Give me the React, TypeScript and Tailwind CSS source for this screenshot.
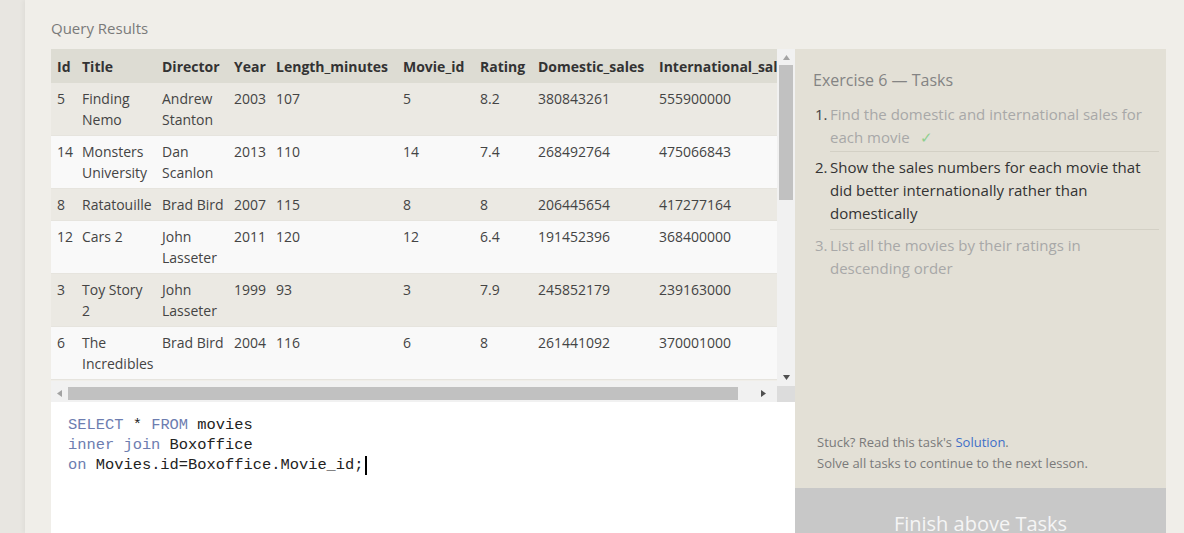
import React from "react"

type Row = {
  id: string
  title: string[]
  director: string[]
  year: string
  length: string
  movieId: string
  rating: string
  domestic: string
  intl: string
}

const rows: Row[] = [
  { id: "5", title: ["Finding", "Nemo"], director: ["Andrew", "Stanton"], year: "2003", length: "107", movieId: "5", rating: "8.2", domestic: "380843261", intl: "555900000" },
  { id: "14", title: ["Monsters", "University"], director: ["Dan", "Scanlon"], year: "2013", length: "110", movieId: "14", rating: "7.4", domestic: "268492764", intl: "475066843" },
  { id: "8", title: ["Ratatouille"], director: ["Brad Bird"], year: "2007", length: "115", movieId: "8", rating: "8", domestic: "206445654", intl: "417277164" },
  { id: "12", title: ["Cars 2"], director: ["John", "Lasseter"], year: "2011", length: "120", movieId: "12", rating: "6.4", domestic: "191452396", intl: "368400000" },
  { id: "3", title: ["Toy Story", "2"], director: ["John", "Lasseter"], year: "1999", length: "93", movieId: "3", rating: "7.9", domestic: "245852179", intl: "239163000" },
  { id: "6", title: ["The", "Incredibles"], director: ["Brad Bird"], year: "2004", length: "116", movieId: "6", rating: "8", domestic: "261441092", intl: "370001000" },
]

const headers = ["Id", "Title", "Director", "Year", "Length_minutes", "Movie_id", "Rating", "Domestic_sales", "International_sales"]
const widths = ["w-[25px]", "w-[80px]", "w-[72px]", "w-[42px]", "w-[127px]", "w-[77px]", "w-[58px]", "w-[121px]", "w-[150px]"]

function Lines({ parts }: { parts: string[] }) {
  return (
    <>
      {parts.map((p, i) => (
        <div key={i} className="whitespace-nowrap">{p}</div>
      ))}
    </>
  )
}

function ResultsTable() {
  return (
    <table className="w-[752px] table-fixed border-collapse text-left">
      <colgroup>
        {widths.map((w, i) => (
          <col key={i} className={w} />
        ))}
      </colgroup>
      <thead>
        <tr className="h-[34px] bg-[#dddcd3]">
          {headers.map((h) => (
            <th key={h} className="px-[6px] text-[14px] font-bold text-[#333] whitespace-nowrap">{h}</th>
          ))}
        </tr>
      </thead>
      <tbody>
        {rows.map((r, i) => (
          <tr key={r.id} className={(i % 2 === 0 ? "bg-[#ebe9e3]" : "bg-[#f9f9f9]") + " border-b border-[#e6e4de] align-top text-[14px] leading-[21px] text-[#444]"}>
            <td className="px-[6px] py-[5px]">{r.id}</td>
            <td className="px-[6px] py-[5px]"><Lines parts={r.title} /></td>
            <td className="px-[6px] py-[5px]"><Lines parts={r.director} /></td>
            <td className="px-[6px] py-[5px]">{r.year}</td>
            <td className="px-[6px] py-[5px]">{r.length}</td>
            <td className="px-[6px] py-[5px]">{r.movieId}</td>
            <td className="px-[6px] py-[5px]">{r.rating}</td>
            <td className="px-[6px] py-[5px]">{r.domestic}</td>
            <td className="px-[6px] py-[5px]">{r.intl}</td>
          </tr>
        ))}
      </tbody>
    </table>
  )
}

export default function App() {
  return (
    <div className="flex h-[533px] w-[1184px] overflow-hidden bg-[#e9e7e2] font-['Open_Sans',sans-serif]">
      {/* side strip */}
      <div className="w-[25px] shrink-0 bg-[#e8e6e1]" />

      <div className="flex flex-1 flex-col bg-[#f0eee9] pl-[26px] shadow-[-2px_0_4px_rgba(0,0,0,0.04)]">
        <div className="flex h-[49px] items-center pt-[8px] text-[15px] text-[#7a7a7a]">Query Results</div>

        <div className="flex flex-1">
          {/* results + editor */}
          <div className="flex w-[744px] flex-col">
            <div className="flex h-[353px]">
              <div className="flex w-[726px] flex-col">
                <div className="h-[332px] overflow-hidden">
                  <ResultsTable />
                </div>
                {/* horizontal scrollbar */}
                <div className="flex h-[21px] items-center bg-[#f1f1f1] pt-[4px]">
                  <div className="flex w-[17px] justify-center">
                    <svg width="5" height="7" viewBox="0 0 5 7"><path d="M5 0 L0 3.5 L5 7 Z" fill="#a3a3a3" /></svg>
                  </div>
                  <div className="h-[13px] w-[670px] bg-[#c1c1c1]" />
                  <div className="flex flex-1 justify-center pl-[12px]">
                    <svg width="5" height="7" viewBox="0 0 5 7"><path d="M0 0 L5 3.5 L0 7 Z" fill="#505050" /></svg>
                  </div>
                </div>
              </div>
              {/* vertical scrollbar */}
              <div className="flex w-[18px] flex-col">
                <div className="flex h-[337px] flex-col bg-[#f1f1f1]">
                  <div className="flex h-[16px] items-center justify-center">
                    <svg width="7" height="5" viewBox="0 0 7 5"><path d="M0 5 L3.5 0 L7 5 Z" fill="#a3a3a3" /></svg>
                  </div>
                  <div className="mx-[2px] h-[135px] bg-[#c1c1c1]" />
                  <div className="flex-1" />
                  <div className="flex h-[16px] items-center justify-center pb-[2px]">
                    <svg width="7" height="5" viewBox="0 0 7 5"><path d="M0 0 L3.5 5 L7 0 Z" fill="#505050" /></svg>
                  </div>
                </div>
                <div className="flex-1 bg-[#dcdcdc]" />
              </div>
            </div>

            {/* SQL editor */}
            <div className="flex-1 bg-white pl-[17px] pt-[13px] font-['Liberation_Mono',monospace] text-[15.4px] leading-[20px] text-[#222]">
              <div><span className="text-[#6d7db0]">SELECT</span> * <span className="text-[#6d7db0]">FROM</span> movies</div>
              <div><span className="text-[#6d7db0]">inner join</span> Boxoffice</div>
              <div className="flex items-center">
                <span><span className="text-[#6d7db0]">on</span> Movies.id=Boxoffice.Movie_id;</span>
                <span className="ml-[1px] inline-block h-[19px] w-[2px] bg-black" />
              </div>
            </div>
          </div>

          {/* tasks panel */}
          <div className="flex w-[371px] flex-col bg-[#e3e0d6]">
            <div className="pl-[18px] pr-[7px] pt-[20px]">
              <div className="text-[16px] leading-[22px] text-[#848484]">Exercise 6 — Tasks</div>
              <ol className="mt-[12px] text-[15px] leading-[23px]">
                <li className="flex">
                  <span className="box-content w-[15px] pl-[2px] text-[#444]">1.</span>
                  <div className="flex-1 border-b border-[#d3d0c5] pb-[2px] text-[#a8a8a8]">
                    <div className="whitespace-nowrap">Find the domestic and international sales for</div>
                    <div className="whitespace-nowrap">each movie <span className="ml-[6px] text-[#8fcf8f]">✓</span></div>
                  </div>
                </li>
                <li className="flex">
                  <span className="box-content w-[15px] pl-[2px] pt-[4px] text-[#333]">2.</span>
                  <div className="flex-1 border-b border-[#d3d0c5] py-[4px] text-[#333]">
                    <div className="whitespace-nowrap">Show the sales numbers for each movie that</div>
                    <div className="whitespace-nowrap">did better internationally rather than</div>
                    <div className="whitespace-nowrap">domestically</div>
                  </div>
                </li>
                <li className="flex">
                  <span className="box-content w-[15px] pl-[2px] pt-[4px] text-[#a8a8a8]">3.</span>
                  <div className="flex-1 py-[4px] text-[#a8a8a8]">
                    <div className="whitespace-nowrap">List all the movies by their ratings in</div>
                    <div className="whitespace-nowrap">descending order</div>
                  </div>
                </li>
              </ol>
            </div>

            <div className="flex-1" />

            <div className="pb-[14px] pl-[22px] text-[13px] leading-[21px] text-[#7a7a7a]">
              <div>Stuck? Read this task's <span className="text-[#3e6fc8]">Solution</span>.</div>
              <div>Solve all tasks to continue to the next lesson.</div>
            </div>
            <div className="flex h-[45px] items-start justify-center bg-[#c8c8c8] pt-[22px] text-[20px] leading-[28px] text-[#f5f5f5]">
              Finish above Tasks
            </div>
          </div>

          <div className="flex-1" />
        </div>
      </div>
    </div>
  )
}
